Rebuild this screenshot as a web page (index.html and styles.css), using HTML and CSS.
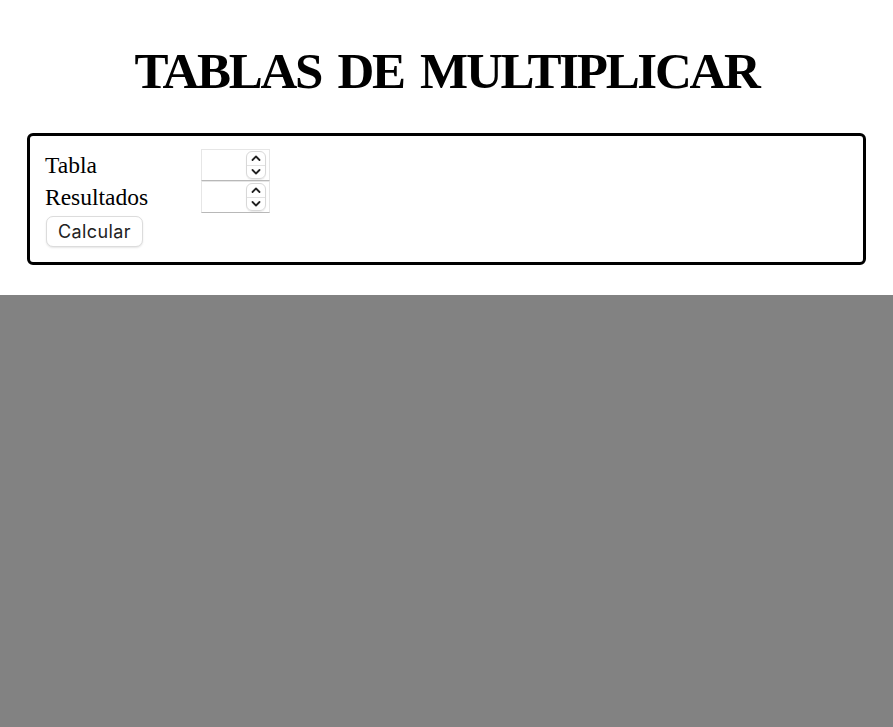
FILE: index.html
```html
<!DOCTYPE html>
<html lang="es">
<head>
    <meta charset="UTF-8">
    <meta name="viewport" content="width=device-width, initial-scale=1.0">
    <title>Tablas de multiplicar</title>
    <link rel="stylesheet" href="styles.css">
</head>
<body>
    <header>
        <h1>TABLAS DE MULTIPLICAR</h1>
    </header>

    <main>
        <form class="form-box" onsubmit="return false;">
            <div class="form-grid">
                <label for="tabla">Tabla</label>
                <div class="num-field">
                    <input type="number" id="tabla">
                    <span class="spin">
                        <span class="spin-btn"><svg viewBox="0 0 10 6" width="10" height="6"><path d="M1.5 5 L5 1.5 L8.5 5" /></svg></span>
                        <span class="spin-btn"><svg viewBox="0 0 10 6" width="10" height="6"><path d="M1.5 1 L5 4.5 L8.5 1" /></svg></span>
                    </span>
                </div>
                <label for="resultados">Resultados</label>
                <div class="num-field">
                    <input type="number" id="resultados">
                    <span class="spin">
                        <span class="spin-btn"><svg viewBox="0 0 10 6" width="10" height="6"><path d="M1.5 5 L5 1.5 L8.5 5" /></svg></span>
                        <span class="spin-btn"><svg viewBox="0 0 10 6" width="10" height="6"><path d="M1.5 1 L5 4.5 L8.5 1" /></svg></span>
                    </span>
                </div>
            </div>
            <button class="calc-button">Calcular</button>
        </form>
    </main>

    <section class="results"></section>
</body>
</html>
```

FILE: styles.css
```css
/* Tablas de multiplicar */
* {
    margin: 0;
    padding: 0;
    box-sizing: border-box;
}

html, body {
    height: 100%;
}

body {
    font-family: 'Liberation Serif', 'Times New Roman', serif;
    background-color: white;
    color: black;
    display: flex;
    flex-direction: column;
}

header {
    padding-top: 37px;
    text-align: center;
}

h1 {
    font-size: 51px;
    font-weight: bold;
    line-height: 69px;
    letter-spacing: -2.3px;
    word-spacing: 6px;
}

main {
    padding: 27px 27px 30px;
}

.form-box {
    border: 3px solid black;
    border-radius: 6px;
    padding: 13px 15px 15px;
}

.form-grid {
    display: grid;
    grid-template-columns: 156px 69px;
    align-items: center;
}

label {
    font-size: 23.5px;
    line-height: 32px;
}

.num-field {
    height: 32px;
    display: flex;
    align-items: center;
    border: 1px solid #e6e6e6;
    border-bottom-color: #b8b8b8;
    background-color: white;
    padding-right: 3px;
}

.num-field input {
    flex: 1;
    min-width: 0;
    height: 100%;
    border: none;
    outline: none;
    background: transparent;
    font-size: 16px;
    -moz-appearance: textfield;
}

.num-field input::-webkit-inner-spin-button,
.num-field input::-webkit-outer-spin-button {
    -webkit-appearance: none;
    margin: 0;
}

.spin {
    width: 20px;
    height: 28px;
    display: flex;
    flex-direction: column;
    border: 1px solid #d8d8d8;
    border-radius: 6px;
    box-shadow: 0 1px 1px rgba(0, 0, 0, 0.08);
    overflow: hidden;
}

.spin-btn {
    flex: 1;
    display: flex;
    align-items: center;
    justify-content: center;
}

.spin-btn + .spin-btn {
    border-top: 1px solid #e2e2e2;
}

.spin-btn path {
    fill: none;
    stroke: #222;
    stroke-width: 1.8;
    stroke-linecap: round;
    stroke-linejoin: round;
}

.calc-button {
    margin-top: 3px;
    margin-left: 1px;
    padding: 0 11px;
    height: 31px;
    font-family: 'Inter', 'Liberation Sans', sans-serif;
    font-size: 18px;
    letter-spacing: 0.4px;
    color: #222;
    background-color: white;
    border: 1px solid #dcdcdc;
    border-radius: 7px;
    box-shadow: 0 1px 2px rgba(0, 0, 0, 0.1);
    cursor: pointer;
}

.results {
    flex: 1;
    background-color: #828282;
}
```
